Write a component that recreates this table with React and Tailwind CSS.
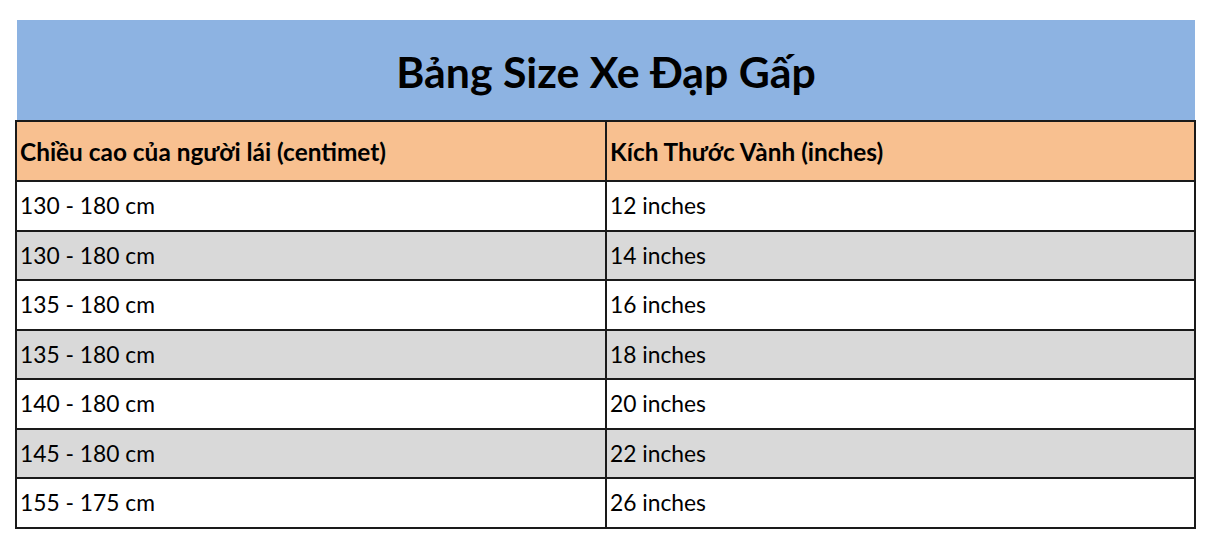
export default function App() {
  const rows = [
    ["130 - 180 cm", "12 inches"],
    ["130 - 180 cm", "14 inches"],
    ["135 - 180 cm", "16 inches"],
    ["135 - 180 cm", "18 inches"],
    ["140 - 180 cm", "20 inches"],
    ["145 - 180 cm", "22 inches"],
    ["155 - 175 cm", "26 inches"],
  ];

  return (
    <main className="min-h-screen bg-white pt-[20px] pl-[15px] text-black" style={{ fontFamily: "Lato, 'Noto Sans', sans-serif" }}>
      <div className="w-[1181px]">
        {/* Title band */}
        <div className="ml-[2px] w-[1178px] h-[100px] bg-[#8db3e2] flex items-center justify-center pt-[4px]">
          <h1 className="text-[42.8px] font-bold leading-none">Bảng Size Xe Đạp Gấp</h1>
        </div>

        {/* Table */}
        <table className="w-full border-collapse table-fixed">
          <colgroup>
            <col className="w-[590px]" />
            <col />
          </colgroup>
          <thead>
            <tr className="bg-[#f8c090] h-[60px]">
              <th className="border-2 border-[#1a1a1a] text-left font-bold text-[24.4px] leading-none pl-[3px] pr-[4px] pt-[2px]">
                Chiều cao của người lái (centimet)
              </th>
              <th className="border-2 border-[#1a1a1a] text-left font-bold text-[24.4px] leading-none pl-[3px] pr-[4px] pt-[2px]">
                Kích Thước Vành (inches)
              </th>
            </tr>
          </thead>
          <tbody>
            {rows.map((row, i) => (
              <tr key={i} className={`h-[49.5px] ${i % 2 === 1 ? "bg-[#d9d9d9]" : "bg-white"}`}>
                <td className="border-2 border-[#1a1a1a] text-[22.8px] leading-none pl-[3px] pr-[4px]">{row[0]}</td>
                <td className="border-2 border-[#1a1a1a] text-[22.8px] leading-none pl-[3px] pr-[4px]">{row[1]}</td>
              </tr>
            ))}
          </tbody>
        </table>
      </div>
    </main>
  );
}
